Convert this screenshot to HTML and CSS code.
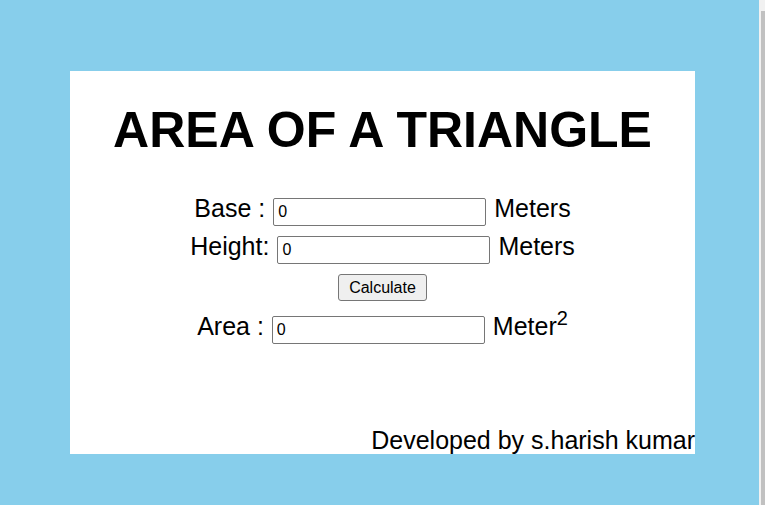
FILE: index.html
```html
<!DOCTYPE html>
<html>
<head>
<meta charset="utf-8">
<link rel="stylesheet" href="styles.css">
</head>
<body>
<div class="card">
  <h1 class="title">AREA OF A TRIANGLE</h1>
  <div class="row row-base"><span class="label">Base :</span><input class="field" type="text" value="0"><span class="unit">Meters</span></div>
  <div class="row row-height"><span class="label">Height:</span><input class="field" type="text" value="0"><span class="unit">Meters</span></div>
  <div class="row row-btn"><button class="calc">Calculate</button></div>
  <div class="row row-area"><span class="label">Area :</span><input class="field" type="text" value="0"><span class="unit">Meter<sup class="sq">2</sup></span></div>
  <p class="dev">Developed by s.harish kumar</p>
</div>
<div class="scrollbar"><div class="thumb"></div></div>
</body>
</html>
```

FILE: styles.css
```css
html, body {
  margin: 0;
  padding: 0;
}
body {
  background: #87ceeb;
  height: 505px;
  overflow: hidden;
  font-family: "Liberation Sans", Arial, sans-serif;
  color: #000;
}
.card {
  margin: 71px 0 0 70px;
  width: 625px;
  height: 383px;
  box-sizing: border-box;
  padding-top: 31px;
  background: #fff;
  display: flex;
  flex-direction: column;
  align-items: center;
}
.title {
  margin: 0;
  font-size: 50px;
  line-height: 56px;
  font-weight: bold;
}
.row {
  display: flex;
  align-items: baseline;
  justify-content: center;
  font-size: 25px;
  line-height: 28px;
}
.row-base { margin-top: 36px; }
.row-height { margin-top: 6px; }
.row-btn { margin-top: 10px; }
.row-area { margin-top: 11px; }
.label { margin-right: 8px; }
.unit { margin-left: 8px; }
.field {
  box-sizing: border-box;
  width: 213px;
  height: 28px;
  margin: 0;
  padding: 0 4px;
  border: 1px solid #767676;
  border-radius: 2px;
  font-family: "Liberation Sans", Arial, sans-serif;
  font-size: 16px;
  color: #000;
  background: #fff;
}
.calc {
  box-sizing: border-box;
  height: 27px;
  width: 89px;
  margin: 0;
  padding: 0;
  border: 1px solid #767676;
  border-radius: 3px;
  background: #efefef;
  font-family: "Liberation Sans", Arial, sans-serif;
  font-size: 16px;
  color: #000;
}
.sq {
  font-size: 20px;
  line-height: 0;
  vertical-align: 10px;
}
.dev {
  margin: auto 0 0 0;
  align-self: flex-end;
  font-size: 25px;
  line-height: 28px;
  white-space: nowrap;
}
.scrollbar {
  position: fixed;
  top: 0;
  right: 0;
  width: 6px;
  height: 505px;
  background: #f1f1f1;
}
.thumb {
  position: absolute;
  top: 11px;
  right: 0;
  width: 4px;
  bottom: 0;
  background: #c1c1c1;
}
```
